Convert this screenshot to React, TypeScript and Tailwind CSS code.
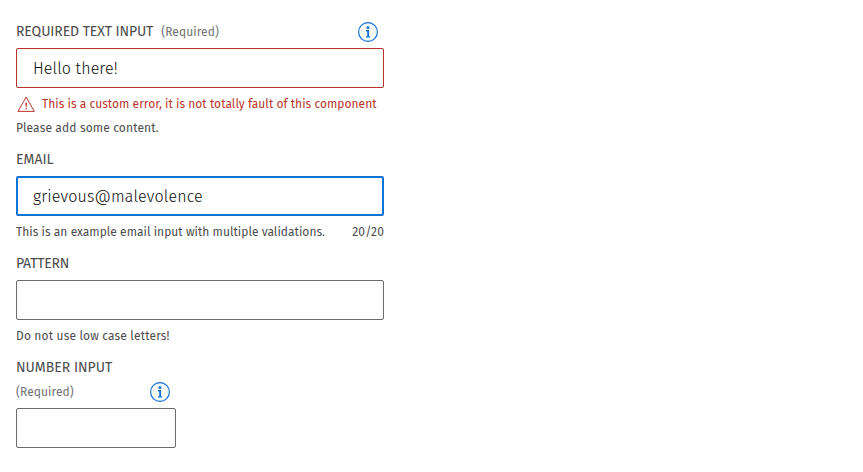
function InfoIcon() {
  return (
    <svg width="20" height="20" viewBox="0 0 20 20" fill="none" className="shrink-0 text-[#0f73d8]">
      <circle cx="10" cy="10" r="9.4" stroke="currentColor" strokeWidth="1.2" />
      <circle cx="10" cy="5.5" r="1.5" fill="currentColor" />
      <path d="M8 8.1H11V14.2H12.2V15.5H7.9V14.2H9.2V9.4H8Z" fill="currentColor" />
    </svg>
  );
}

function WarningIcon() {
  return (
    <svg width="20" height="20" viewBox="0 0 20 20" fill="none" className="shrink-0 text-[#b9362b]">
      <path d="M10.2 3.1 L18.3 17.4 H1.9 Z" stroke="currentColor" strokeWidth="1" strokeLinejoin="round" />
      <path d="M9.4 8.8H11L10.7 12.9H9.7Z" fill="currentColor" />
      <circle cx="10.2" cy="14.8" r=".8" fill="currentColor" />
    </svg>
  );
}

const label = "text-[14px] leading-6 text-[#4d4d4d]";
const hint = "text-[12px] leading-4 text-[#4d4d4d]";
const optional = "text-[12px] leading-6 tracking-[0.08px] text-[#737373]";
const field =
  "block h-10 rounded-[2px] border bg-white font-light text-[16px] text-[#0d0d0d] outline-none";

export default function App() {
  return (
    <main className="flex h-[472px] flex-col gap-3 overflow-hidden bg-white px-4 pt-5 font-['Fira_Sans','Open_Sans',sans-serif] whitespace-nowrap">
      <section className="flex w-[368px] flex-col">
        <div className="flex h-7 items-start justify-between pr-1.5">
          <div className="flex gap-2">
            <label className={`${label} tracking-[-0.1px]`}>REQUIRED TEXT INPUT</label>
            <span className={optional}>(Required)</span>
          </div>
          <div className="pt-0.5">
            <InfoIcon />
          </div>
        </div>
        <input className={`${field} w-full border-[#b9362b] px-4 tracking-[0.12px]`} defaultValue="Hello there!" />
        <div className="mt-1.5 flex h-5 items-center gap-1.5 text-[12px] tracking-[0.03px] text-[#b9362b]">
          <WarningIcon />
          <span className="leading-5">This is a custom error, it is not totally fault of this component</span>
        </div>
        <p className={`${hint} mt-1.5 tracking-[0.13px]`}>Please add some content.</p>
      </section>

      <section className="flex w-[368px] flex-col">
        <div className="-mt-px h-7">
          <label className={label}>EMAIL</label>
        </div>
        <input
          className={`${field} mt-px w-full border-2 border-[#0f73d8] px-[15px] tracking-[0.17px]`}
          defaultValue="grievous@malevolence"
        />
        <div className={`${hint} mt-2 flex justify-between`}>
          <span className="tracking-[0.03px]">This is an example email input with multiple validations.</span>
          <span className="tracking-[0.15px]">20/20</span>
        </div>
      </section>

      <section className="-mt-1 flex w-[368px] flex-col pt-1">
        <div className="-mt-px h-7">
          <label className={`${label} tracking-[-0.2px]`}>PATTERN</label>
        </div>
        <input className={`${field} mt-px w-full border-[#6b6b6b] px-4`} />
        <p className={`${hint} mt-2 tracking-[0.15px]`}>Do not use low case letters!</p>
      </section>

      <section className="flex w-40 flex-col">
        <div className="-mt-px h-6">
          <label className={label}>NUMBER INPUT</label>
        </div>
        <div className="mt-px flex h-7 items-start justify-between pr-1.5">
          <span className={optional}>(Required)</span>
          <div className="pt-0.5">
            <InfoIcon />
          </div>
        </div>
        <input className={`${field} w-full border-[#6b6b6b] px-4`} />
      </section>
    </main>
  );
}
